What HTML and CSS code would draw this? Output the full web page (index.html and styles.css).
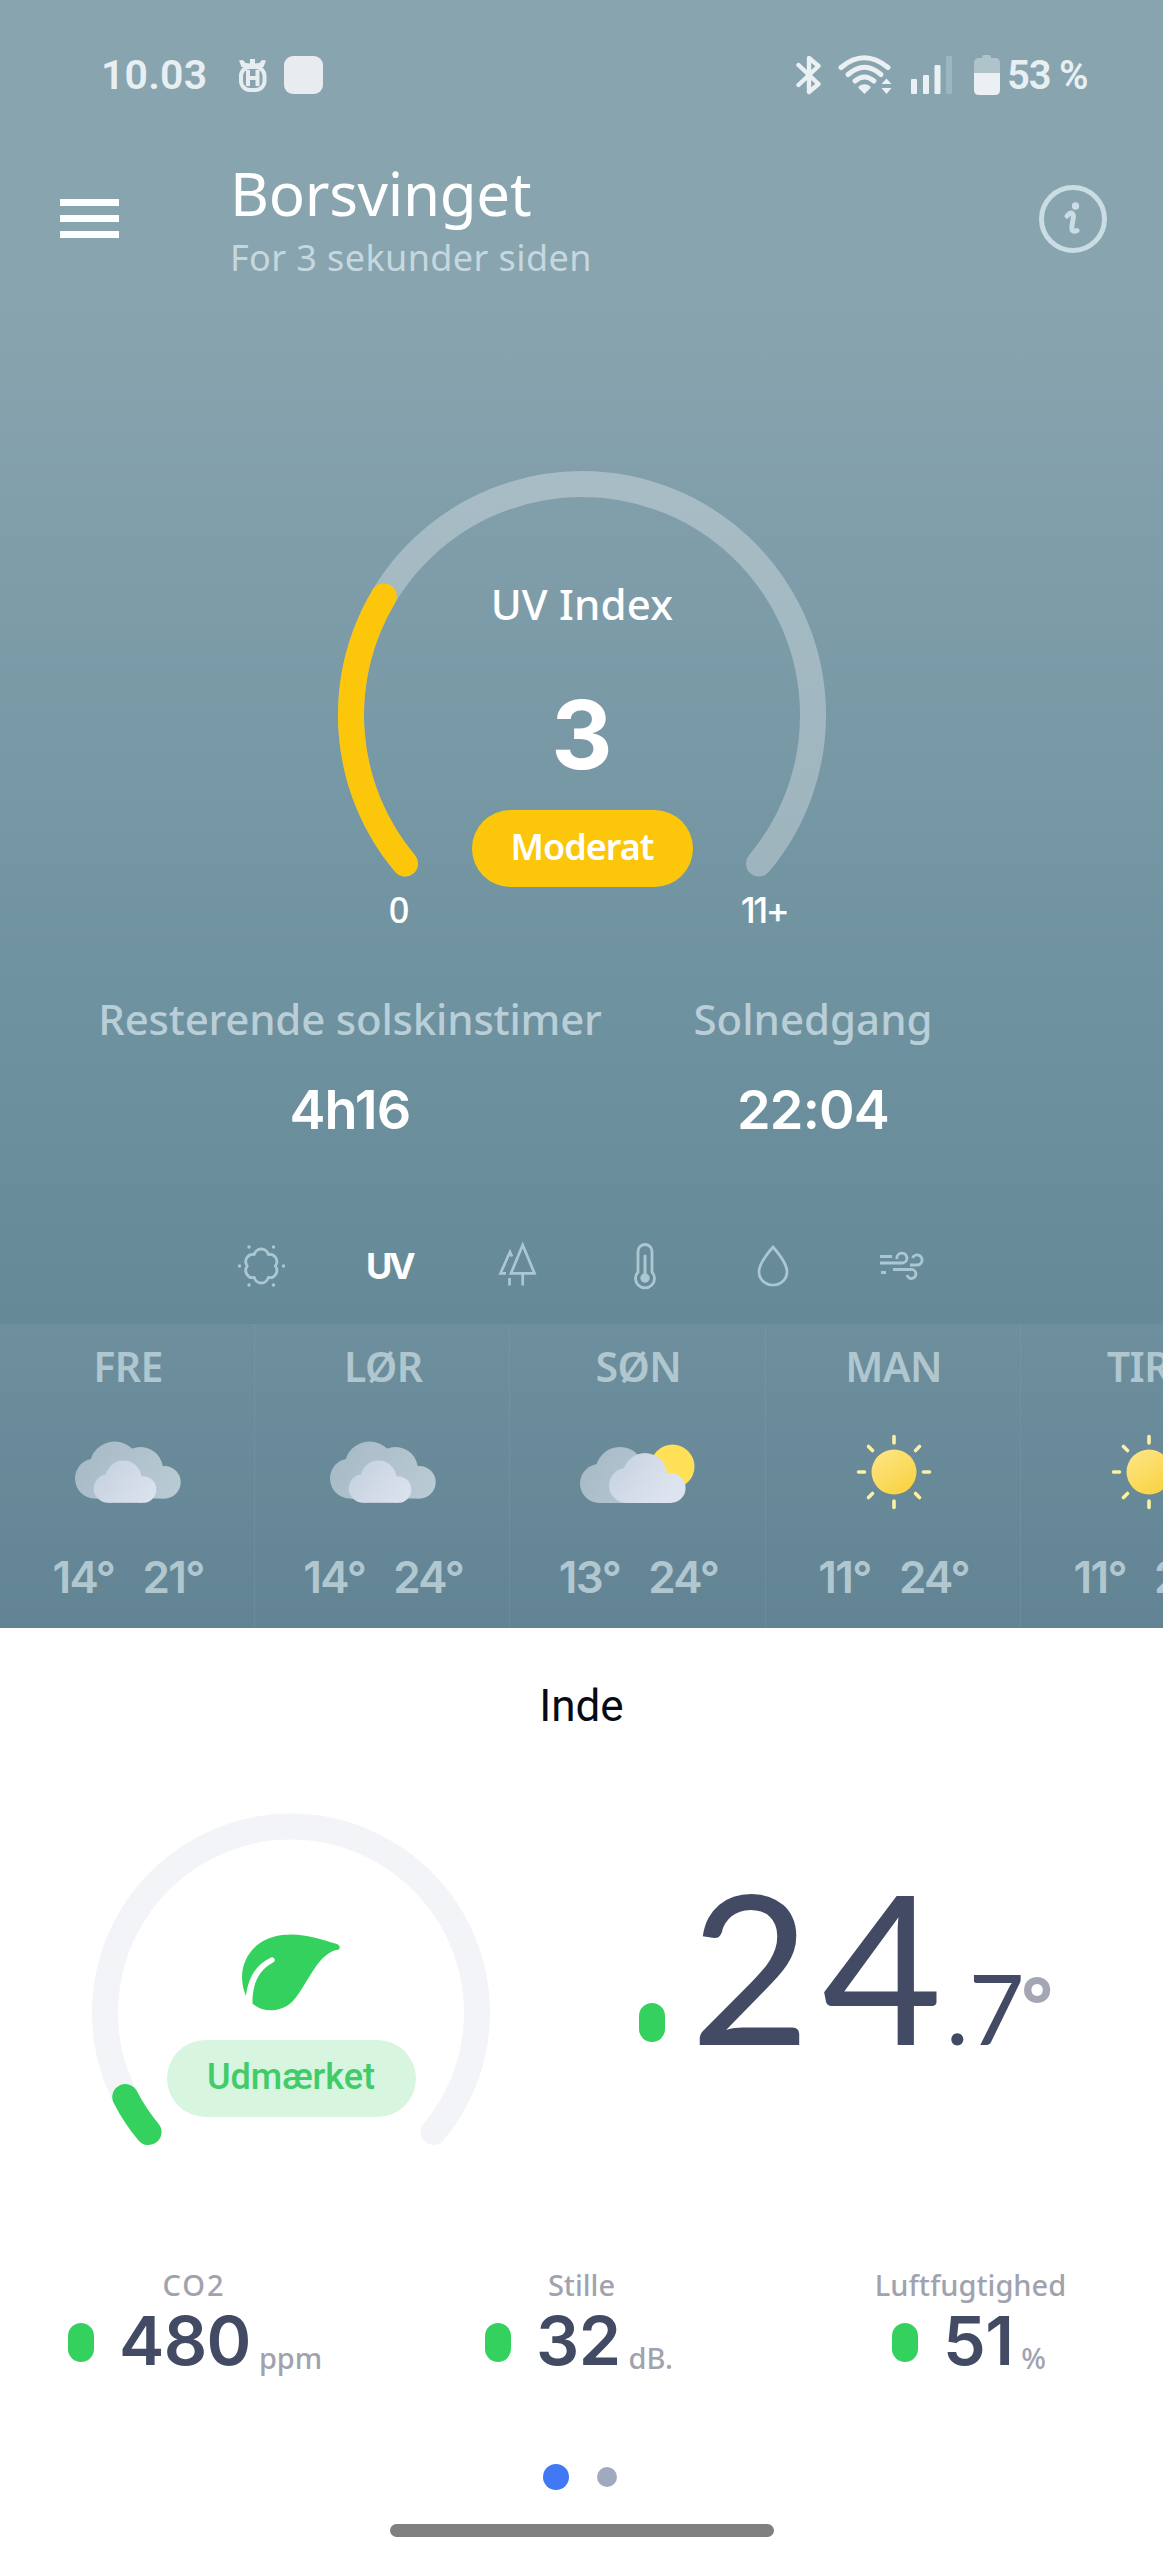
FILE: index.html
```html
<!DOCTYPE html>
<html lang="da">
<head>
<meta charset="utf-8">
<title>Borsvinget</title>
<link rel="stylesheet" href="styles.css">
</head>
<body>
<svg class="defs" width="0" height="0" aria-hidden="true">
  <defs>
    <linearGradient id="cloudBack" gradientUnits="userSpaceOnUse" x1="5" y1="5" x2="95" y2="60"><stop offset="0" stop-color="#a6bac6"/><stop offset="1" stop-color="#b9cad3"/></linearGradient>
    <linearGradient id="cloudFront" gradientUnits="userSpaceOnUse" x1="30" y1="25" x2="80" y2="65"><stop offset="0" stop-color="#c8d3e0"/><stop offset="1" stop-color="#dde4ef"/></linearGradient>
    <linearGradient id="sunFill" x1="0" y1="0" x2=".7" y2="1"><stop offset="0" stop-color="#ffe68a"/><stop offset="1" stop-color="#f9d342"/></linearGradient>
    <symbol id="cloudy" viewBox="0 0 106 62">
      <g fill="url(#cloudBack)"><circle cx="20" cy="37.500" r="20"/><circle cx="39.600" cy="25.500" r="25"/><circle cx="65.500" cy="28.500" r="22.500"/><circle cx="89.500" cy="41.300" r="16.200"/><rect x="20" y="30" width="69.500" height="27.500"/></g>
      <g fill="url(#cloudFront)"><circle cx="33" cy="47.500" r="14.300"/><circle cx="48.500" cy="37.500" r="18"/><circle cx="68" cy="48.500" r="13.300"/><rect x="33" y="44" width="35" height="17.800"/></g>
    </symbol>
    <symbol id="partly" viewBox="0 0 116 62">
      <circle cx="92.500" cy="25.500" r="22" fill="#ffe057"/>
      <g fill="url(#cloudBack)"><circle cx="19.500" cy="42.500" r="19.500"/><circle cx="40" cy="30.500" r="24.500"/><rect x="19.500" y="35" width="40" height="27"/></g>
      <g fill="url(#cloudFront)"><circle cx="46.500" cy="44.500" r="17.500"/><circle cx="65" cy="34" r="22"/><circle cx="90.600" cy="47" r="15"/><rect x="46.500" y="40" width="44.100" height="22"/></g>
    </symbol>
    <symbol id="sunny" viewBox="0 0 80 80">
      <circle cx="40" cy="40" r="22.500" fill="url(#sunFill)"/>
      <g stroke="#fbf0a4" stroke-width="3.600" stroke-linecap="round">
        <path d="M40 4.500V11M40 69V75.500M4.500 40H10.500M69.500 40H75.500M14.500 14.500L18.500 18.500M61.500 61.500L65.500 65.500M65.500 14.500L61.500 18.500M18.500 61.500L14.500 65.500"/>
      </g>
    </symbol>
  </defs>
</svg>

<main class="screen">
  <section class="outdoor">
    <div class="statusbar">
      <span class="clock">10.03</span>
      <svg class="crown" width="28" height="34" viewBox="0 0 28 34"><path d="M0 2.500L4 2L6.500 5L11 5.500V1H16V5.500L20.500 5L23 2L27 2.500L24.500 9H2.500Z" fill="#e6edf1"/><rect x="2" y="9" width="23.500" height="23" rx="9" fill="none" stroke="#e6edf1" stroke-width="4"/><path d="M9 12V28M18.500 12V28M9 20H18.500" stroke="#e6edf1" stroke-width="4"/></svg>
      <span class="app-square"></span>
      <svg class="bluetooth" width="26" height="40" viewBox="0 0 26 40"><path d="M2.500 10L22.500 29L13 37V3L22.500 11L2.500 30" fill="none" stroke="#eaf0f3" stroke-width="4.400" stroke-linecap="round" stroke-linejoin="round"/></svg>
      <svg class="wifi" width="55" height="40" viewBox="0 0 55 40"><g fill="none" stroke="#eaf0f3" stroke-width="5" stroke-linecap="round"><path d="M3 12.500Q26 -7 50 12.500"/><path d="M10 19.500Q26.500 5 43 19.500"/><path d="M17 26Q26.500 18 36 26"/></g><path d="M20.500 31.500Q26.500 27 32.500 31.500V33L26.500 39L20.500 33Z" fill="#eaf0f3"/><path d="M43.500 29L48.500 23.500L53.500 29ZM43.500 33L48.500 39L53.500 33Z" fill="#eaf0f3"/></svg>
      <svg class="signal" width="42" height="40" viewBox="0 0 42 40"><g fill="#eaf0f3"><rect y="24" width="6" height="15" rx="1"/><rect x="12" y="20" width="6" height="19" rx="1"/><rect x="23.500" y="10" width="6" height="29" rx="1"/></g><rect x="35" y="1" width="6" height="38" rx="1" fill="#9bb5c1"/></svg>
      <svg class="battery" width="26" height="40" viewBox="0 0 26 40"><path d="M5 3H8V2Q8 0 10 0H15Q17 0 17 2V3H21Q26 3 26 8V18H0V8Q0 3 5 3Z" fill="#afc3ca"/><path d="M0 18H26V35Q26 40 21 40H5Q0 40 0 35Z" fill="#eaf0f3"/></svg>
      <span class="charge">53 %</span>
    </div>

    <header class="header">
      <div class="burger"><i></i><i></i><i></i></div>
      <div class="titles">
        <h1>Borsvinget</h1>
        <p>For 3 sekunder siden</p>
      </div>
      <svg class="info" width="68" height="68" viewBox="0 0 68 68" fill="none" stroke="#cbdde4"><circle cx="34" cy="34" r="31.500" stroke-width="5"/><path d="M28 31Q33 25 34.500 31L33 41Q32 48 38 45.500" stroke-width="5" stroke-linecap="round"/><circle cx="36.500" cy="21" r="3.700" fill="#cbdde4" stroke="none"/></svg>
    </header>

    <div class="uv-gauge">
      <svg class="arc" width="488" height="416" viewBox="0 0 488 416" fill="none" stroke-width="26" stroke-linecap="round">
        <path d="M67 392.500A231 231 0 1 1 421 392.500" stroke="#fff" stroke-opacity=".3"/>
        <path d="M67 392.500A231 231 0 0 1 45.800 125.400" stroke="#fcc60a"/>
      </svg>
      <div class="uv-body">
        <div class="uv-title">UV Index</div>
        <div class="uv-value">3</div>
        <div class="uv-pill">Moderat</div>
      </div>
    </div>
    <div class="uv-range"><span>0</span><span>11+</span></div>

    <div class="sun-info">
      <div class="sun-left"><span class="sun-label">Resterende solskinstimer</span><b>4h16</b></div>
      <div class="sun-right"><span class="sun-label">Solnedgang</span><b>22:04</b></div>
    </div>

    <nav class="tabs">
      <svg width="48" height="48" viewBox="0 0 48 48"><path d="M17.300 12.500A7.200 7.200 0 0 1 31.300 12.500A7.200 7.200 0 0 1 38.300 24A7.200 7.200 0 0 1 31.300 35.500A7.200 7.200 0 0 1 17.300 35.500A7.200 7.200 0 0 1 10.300 24A7.200 7.200 0 0 1 17.300 12.500Z" fill="none" stroke="#abc8d2" stroke-width="2.800" stroke-linejoin="round"/><g fill="#abc8d2"><circle cx="12" cy="5" r="1.700"/><circle cx="36.500" cy="5" r="1.700"/><circle cx="2.500" cy="24" r="1.700"/><circle cx="46.500" cy="24" r="1.700"/><circle cx="12" cy="43" r="1.700"/><circle cx="36.500" cy="43" r="1.700"/></g></svg>
      <span class="tab-uv">UV</span>
      <svg width="48" height="48" viewBox="0 0 48 48" fill="none" stroke="#abc8d2" stroke-width="2.700"><path d="M29.700 3L41.500 31.300H18ZM29.700 31.300V43.500M16.500 36V43.500M19 14.500L17 10L7.500 31.300H13"/></svg>
      <svg width="48" height="48" viewBox="0 0 48 48"><path d="M17 9.500A7 7 0 0 1 31 9.500V30A9.500 9.500 0 1 1 17 30Z" fill="none" stroke="#abc8d2" stroke-width="2.800"/><path d="M24 14V36" stroke="#abc8d2" stroke-width="3" stroke-linecap="round"/><circle cx="24" cy="36" r="4.700" fill="#abc8d2"/></svg>
      <svg width="48" height="48" viewBox="0 0 48 48"><path d="M24 5Q38 21 38 30A14 13 0 0 1 10 30Q10 21 24 5Z" fill="none" stroke="#abc8d2" stroke-width="2.700"/></svg>
      <svg width="48" height="48" viewBox="0 0 48 48" fill="none" stroke="#abc8d2" stroke-width="2.800"><path d="M3 14.500H15M3 21H26A5 5 0 1 0 20 17M33 23H40A5 5 0 1 0 35.500 16M16 27.500H34A4.500 4.500 0 1 1 30 33M4 30.500H9"/></svg>
    </nav>

    <div class="forecast">
      <div class="day"><span class="name">FRE</span><svg class="wx cloudy"><use href="#cloudy"/></svg><span class="temps"><b>14°</b><b>21°</b></span></div>
      <div class="day"><span class="name">LØR</span><svg class="wx cloudy"><use href="#cloudy"/></svg><span class="temps"><b>14°</b><b>24°</b></span></div>
      <div class="day"><span class="name">SØN</span><svg class="wx partly"><use href="#partly"/></svg><span class="temps"><b>13°</b><b>24°</b></span></div>
      <div class="day"><span class="name">MAN</span><svg class="wx sunny"><use href="#sunny"/></svg><span class="temps"><b>11°</b><b>24°</b></span></div>
      <div class="day"><span class="name wide">TIR</span><svg class="wx sunny"><use href="#sunny"/></svg><span class="temps"><b>11°</b><b>24°</b></span></div>
    </div>
  </section>

  <section class="indoor">
    <h2>Inde</h2>
    <div class="indoor-main">
      <div class="air-gauge">
        <svg class="arc" width="398" height="340" viewBox="0 0 398 340" fill="none" stroke-width="26" stroke-linecap="round">
          <path d="M56.500 319.100A186 186 0 1 1 341.500 319.100" stroke="#f3f4f7"/>
          <path d="M56.500 319.100A186 186 0 0 1 33.300 284" stroke="#35d15f"/>
        </svg>
        <div class="air-body">
          <svg class="leaf" width="100" height="77" viewBox="0 0 100 77"><path d="M6 62C-6 34 10 5 42 1C63-1.500 80 5 97 10C101 12 100.500 16 96 16C76 22 68 50 53 67C41 79 23 79 12.500 69.500C12 50 19 36 33 28.500A2.500 2.500 0 0 0 31 23.500C15 31 8 45 6 62Z" fill="#35d15f"/></svg>
          <div class="air-pill">Udmærket</div>
        </div>
      </div>
      <div class="temperature">
        <i class="led"></i><span class="whole">24</span><span class="fraction">.7</span><span class="degree">°</span>
      </div>
    </div>
    <div class="metrics">
      <div class="metric m-co2"><span class="label">CO2</span><div class="reading"><i class="led"></i><b>480</b><small>ppm</small></div></div>
      <div class="metric m-noise"><span class="label">Stille</span><div class="reading"><i class="led"></i><b>32</b><small>dB.</small></div></div>
      <div class="metric m-hum"><span class="label">Luftfugtighed</span><div class="reading"><i class="led"></i><b>51</b><small>%</small></div></div>
    </div>
    <div class="pager"><i class="on"></i><i></i></div>
    <div class="home-bar"></div>
  </section>
</main>
</body>
</html>
```

FILE: styles.css
```css
* { box-sizing: border-box; }
body { margin: 0; background: #fff; font-family: "Noto Sans", "Open Sans", sans-serif; }
svg { display: block; flex: none; }
.defs { position: absolute; }
h1, h2, p { margin: 0; font-weight: 400; }
b { font-weight: 600; }
.screen { width: 1163px; height: 2560px; overflow: hidden; }

.outdoor {
  height: 1628px;
  display: flex;
  flex-direction: column;
  color: #fff;
  background: linear-gradient(#88a4af 0, #88a4af 300px, #6f92a0 1000px, #668998 1324px, #5f8192 1628px);
}

.statusbar {
  height: 150px;
  padding-left: 101px;
  display: flex;
  align-items: center;
  font: 600 41px/50px Roboto, sans-serif;
  color: #e8eff3;
}
.clock { width: 138px; letter-spacing: .2px; }
.app-square { width: 39px; height: 38px; margin-left: 17px; border-radius: 9px; background: #e8ecf0; }
.bluetooth { margin-left: 473px; }
.wifi { margin-left: 16px; }
.signal { margin-left: 18px; }
.battery { margin-left: 21px; }
.charge { margin-left: 7px; padding-top: 2px; font-size: 40px; letter-spacing: -1.200px; white-space: nowrap; }

.header { height: 145px; display: flex; padding: 10px 56px 0 60px; }
.burger { width: 59px; height: 39px; margin-top: 39px; display: flex; flex-direction: column; justify-content: space-between; }
.burger i { height: 7px; background: #fff; }
.titles { flex: 1; margin-left: 111px; padding-top: 2px; }
.titles h1 { font-size: 60px; line-height: 62px; letter-spacing: -.3px; font-weight: 380; }
.titles p { margin-top: 12px; font-size: 36px; line-height: 44px; font-weight: 380; letter-spacing: .4px; color: #c6d8df; }
.info { margin-top: 25px; }

.uv-gauge { position: relative; width: 488px; height: 416px; margin: 176px auto 0 338px; }
.arc { position: absolute; left: 0; top: 0; }
.uv-body { position: relative; padding-top: 107px; display: flex; flex-direction: column; align-items: center; }
.uv-title { font-size: 42px; line-height: 52px; font-weight: 500; letter-spacing: .2px; }
.uv-value { margin-top: 49px; font: 700 95px/112px Inter, sans-serif; }
.uv-pill { width: 221px; height: 77px; margin-top: 19px; border-radius: 39px; background: #fcc60a; font-size: 36px; line-height: 74px; font-weight: 600; letter-spacing: -1px; text-align: center; }
.uv-range { display: flex; height: 50px; font-size: 36px; line-height: 46px; font-weight: 500; }
.uv-range span { width: 60px; margin-left: 369px; text-align: center; }
.uv-range span + span { width: 80px; margin-left: 295px; font-family: Inter, sans-serif; letter-spacing: -2.500px; }

.sun-info { display: flex; height: 200px; margin-top: 56px; }
.sun-info div { display: flex; flex-direction: column; align-items: center; }
.sun-left { width: 560px; margin-left: 70px; }
.sun-right { width: 366px; }
.sun-label { font-size: 42px; line-height: 52px; font-weight: 500; color: #b9ced7; white-space: nowrap; }
.sun-left .sun-label { letter-spacing: -.2px; }
.sun-info b { margin-top: 35px; font-family: Inter, sans-serif; font-size: 54px; line-height: 60px; letter-spacing: -.8px; }

.tabs { display: flex; gap: 80px; margin: 49px 0 0 237px; height: 82px; }
.tab-uv { width: 48px; font: 700 36px/48px Inter, sans-serif; letter-spacing: -3.500px; text-align: center; }

.forecast { display: grid; grid-template-columns: repeat(5, 255.200px); height: 304px; overflow: hidden; background: linear-gradient(rgba(255,255,255,.05), rgba(255,255,255,.02)); }
.day { display: flex; flex-direction: column; align-items: center; height: 304px; padding-left: 1px; box-shadow: inset -1px 0 rgba(255,255,255,.06); color: #b1c7d0; }
.name { margin-top: 17px; font-size: 41px; line-height: 50px; font-weight: 600; letter-spacing: -.5px; }
.wide { margin-right: 21px; }
.wx { margin-top: auto; }
.cloudy { width: 106px; height: 62px; margin-top: 50px; }
.partly { width: 116px; height: 62px; margin-top: 50px; }
.sunny { width: 80px; height: 80px; margin-top: 41px; }
.temps { display: flex; gap: 28px; margin-top: auto; margin-bottom: 21px; font: 600 44px/60px Inter, sans-serif; letter-spacing: -1.600px; }

.indoor { display: flex; flex-direction: column; height: 932px; }
h2 { margin-top: 51px; height: 134px; font: 400 44px/54px Roboto, sans-serif; text-align: center; color: #060a14; }
.indoor-main { display: flex; height: 400px; }
.air-gauge { position: relative; width: 398px; height: 340px; margin-left: 92px; }
.air-body { position: relative; padding-top: 121px; display: flex; flex-direction: column; align-items: center; }
.leaf { margin-right: 2px; }
.air-pill { width: 249px; height: 77px; margin-top: 29px; border-radius: 39px; background: #d7f5df; color: #41cb69; font: 500 36px/75px Roboto, sans-serif; text-align: center; }
.led { width: 26px; height: 39px; border-radius: 13px; background: #35d15f; flex: none; }
.temperature { display: flex; align-items: baseline; height: 300px; margin-left: 149px; padding-top: 2px; color: #424b63; font-family: Lato, sans-serif; line-height: 300px; }
.temperature .led { align-self: flex-start; margin-top: 188px; }
.whole { width: 256px; margin-left: 25px; font-size: 208px; letter-spacing: 11px; }
.fraction { width: 75px; font-size: 96px; }
.degree { align-self: flex-start; margin-top: 38px; color: #a3a6b3; font-family: "Noto Sans", sans-serif; font-size: 76px; font-weight: 700; }

.metrics { display: flex; height: 187px; margin-top: 54px; }
.metric { display: flex; flex-direction: column; }
.label { font-size: 29px; line-height: 36px; font-weight: 500; text-align: center; color: #a0a3ae; }
.m-co2 .label { letter-spacing: 2px; }
.reading { display: flex; align-items: center; height: 78px; color: #424b63; }
.reading b { margin-left: 25px; margin-bottom: 4px; font-family: Inter, sans-serif; font-size: 68px; line-height: 78px; letter-spacing: -.6px; }
.reading small { margin-left: 8px; margin-top: 31px; font-size: 29px; line-height: 40px; font-weight: 500; color: #a0a3ae; }
.m-co2 { width: 252px; margin-left: 68px; }
.m-noise { width: 193px; margin-left: 165px; }
.m-hum { width: 193px; margin-left: 196px; }
.m-hum .reading { padding-left: 18px; }

.pager { display: flex; align-items: center; gap: 28px; height: 26px; margin: 10px 0 0 543px; }
.pager i { width: 20px; height: 20px; border-radius: 50%; background: #a1a9bf; }
.pager .on { width: 26px; height: 26px; background: #4179f5; }
.home-bar { width: 384px; height: 13px; margin: 34px auto 0 390px; border-radius: 7px; background: #808080; }
```
